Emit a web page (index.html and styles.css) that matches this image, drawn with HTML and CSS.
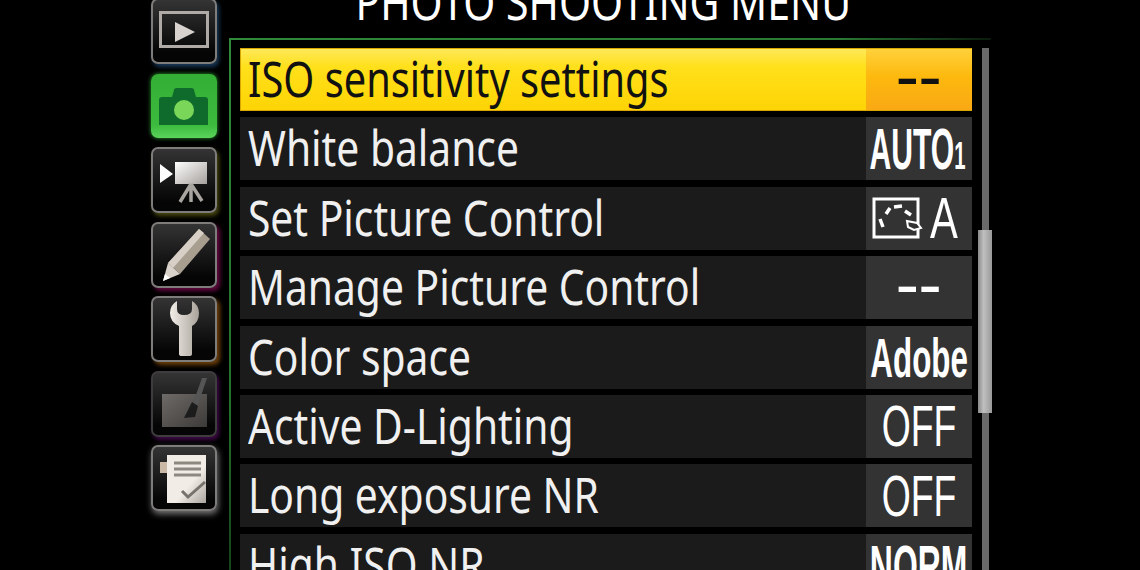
FILE: index.html
```html
<!DOCTYPE html>
<html lang="en">
<head>
  <meta charset="UTF-8" />
  <title>Photo Shooting Menu</title>
  <link rel="stylesheet" href="styles.css">
</head>
<body>
  <div class="screen">
    <div class="tabs">
      <div class="tab tab-play">
        <svg viewBox="0 0 66 66"><rect x="9.5" y="14.5" width="47" height="34" fill="none" stroke="#b0aaa6" stroke-width="3"/><path d="M24 24 L44 34 L24 44 Z" fill="#d8d2ce"/></svg>
      </div>
      <div class="tab tab-camera">
        <svg viewBox="0 0 66 64"><path d="M8 26 Q8 23 11 23 L21 23 L23 16 Q23 14 26 14 L40 14 Q43 14 43 16 L45 23 L54 23 Q57 23 57 26 L57 51 L8 51 Z" fill="#0f6b2c"/><circle cx="33" cy="36" r="10" fill="#7ad658"/></svg>
      </div>
      <div class="tab tab-movie">
        <svg viewBox="0 0 66 66">
          <defs><linearGradient id="screen-fill" x1="0" y1="0" x2="1" y2="1"><stop offset="0" stop-color="#fff"/><stop offset="1" stop-color="#a5a09c"/></linearGradient></defs>
          <path d="M9 17 L22 27 L9 36 Z" fill="#fff"/>
          <rect x="24" y="15" width="32" height="22" fill="url(#screen-fill)"/>
          <path d="M40 37 L29 55 M40 37 L40 55 M40 37 L51 54" stroke="#a8a4a0" stroke-width="3.5" fill="none"/>
        </svg>
      </div>
      <div class="tab tab-pencil">
        <svg viewBox="0 0 66 66">
          <path d="M17 41 L48 7 L59 17 L29 52 Z" fill="#a89e90"/>
          <path d="M17 41 L48 7 L53 11 L22 46 Z" fill="#d8d0c6"/>
          <path d="M17 41 L29 52 L12 59 Z" fill="#d8d2ca"/>
          <path d="M14 52 L19 56 L12 59 Z" fill="#fff"/>
        </svg>
      </div>
      <div class="tab tab-wrench">
        <svg viewBox="0 0 66 66">
          <defs><linearGradient id="wrench-fill" x1="0" y1="0" x2="1" y2="0"><stop offset="0" stop-color="#f2eee8"/><stop offset="1" stop-color="#a8a29a"/></linearGradient></defs>
          <path d="M26 5 L26 13 Q26 19 33 19 Q41 19 41 13 L41 5 Q48 9 48 17 Q48 26 41 30 L41 58 Q41 60 38 60 L31 60 Q28 60 28 58 L28 30 Q19 26 19 17 Q19 9 26 5 Z" fill="url(#wrench-fill)"/>
        </svg>
      </div>
      <div class="tab tab-retouch">
        <svg viewBox="0 0 66 66">
          <defs><linearGradient id="retouch-fill" x1="0" y1="0" x2="1" y2="1"><stop offset="0" stop-color="#6e6a68"/><stop offset="1" stop-color="#3c3a38"/></linearGradient></defs>
          <rect x="11" y="23" width="45" height="33" fill="url(#retouch-fill)"/>
          <path d="M56 7 L51 7 L42 32 L47 34 Z" fill="#555"/>
          <path d="M41 31 L47 35 L44 46 L33 47 Z" fill="#1c1c1c"/>
        </svg>
      </div>
      <div class="tab tab-recent">
        <svg viewBox="0 0 66 66">
          <defs><linearGradient id="sheet-fill" x1="0" y1="0" x2="1" y2="1"><stop offset="0.6" stop-color="#f1ede6"/><stop offset="1" stop-color="#a9a49e"/></linearGradient></defs>
          <rect x="9" y="17" width="8" height="11" fill="#c9b9a6"/>
          <rect x="16" y="10" width="39" height="48" fill="url(#sheet-fill)"/>
          <path d="M23 18 H50 M23 24 H50 M23 30 H50" stroke="#8d8880" stroke-width="2.8"/>
          <path d="M31 46 L37 52 L54 37" stroke="#77726c" stroke-width="3" fill="none"/>
        </svg>
      </div>
    </div>

    <div class="main">
      <h1 class="title"><span>PHOTO SHOOTING MENU</span></h1>
      <div class="panel">
        <ul class="rows">
          <li class="row row-active"><span class="label"><span>ISO sensitivity settings</span></span><span class="value"><span class="dashes">--</span></span></li>
          <li class="row"><span class="label"><span>White balance</span></span><span class="value"><span class="narrow narrow-auto">AUTO<small>1</small></span></span></li>
          <li class="row"><span class="label"><span>Set Picture Control</span></span><span class="value value-pc">
            <svg class="pc-icon" viewBox="0 0 48 42"><rect x="2" y="2" width="44" height="38" fill="none" stroke="#fff" stroke-width="3"/><path d="M8 22 L11 30 M14 17 L18 11 M22 10 L30 9 M33 14 L39 18" stroke="#fff" stroke-width="3.5" fill="none"/><path d="M35 24 L45 26 L49 31 L42 33 L36 30 Z" fill="#333" stroke="#fff" stroke-width="2"/></svg>
            <span class="pc-letter">A</span>
          </span></li>
          <li class="row"><span class="label"><span>Manage Picture Control</span></span><span class="value"><span class="dashes">--</span></span></li>
          <li class="row"><span class="label"><span>Color space</span></span><span class="value"><span class="narrow narrow-adobe">Adobe</span></span></li>
          <li class="row"><span class="label"><span>Active D-Lighting</span></span><span class="value"><span class="off">OFF</span></span></li>
          <li class="row"><span class="label"><span>Long exposure NR</span></span><span class="value"><span class="off">OFF</span></span></li>
          <li class="row"><span class="label"><span>High ISO NR</span></span><span class="value"><span class="narrow narrow-norm">NORM</span></span></li>
        </ul>
        <div class="scrollbar"><div class="thumb"></div></div>
      </div>
    </div>
  </div>
</body>
</html>
```

FILE: styles.css
```css
html, body {
  margin: 0;
  padding: 0;
  height: 570px;
  overflow: hidden;
  background: #000;
}

body {
  font-family: "Noto Sans", "Open Sans", sans-serif;
  color: #f0f0f0;
}

.screen {
  display: flex;
  align-items: flex-start;
  padding-left: 151px;
  margin-top: -2px;
}

.tabs {
  display: flex;
  flex-direction: column;
  gap: 8.5px;
  width: 66px;
  flex: none;
}

.tab {
  height: 66px;
  box-sizing: border-box;
  border: 2px solid #7f7d7b;
  border-radius: 7px;
  background: linear-gradient(#343434, #050505 85%);
}

.tab svg {
  display: block;
  width: 66px;
  height: 66px;
  margin: -2px;
}

.tab-play { box-shadow: 2px 3px 4px rgba(30, 70, 110, 0.8); }
.tab-movie { box-shadow: 2px 3px 4px rgba(90, 90, 20, 0.8); }
.tab-pencil { box-shadow: 3px 3px 4px rgba(110, 10, 70, 0.9); }
.tab-wrench { box-shadow: 3px 3px 4px rgba(120, 70, 10, 0.9); }
.tab-retouch { border-color: #3e3c3c; box-shadow: 2px 3px 4px rgba(70, 10, 80, 0.9); }
.tab-recent { box-shadow: 1px 3px 6px rgba(170, 170, 170, 0.7); }

.tab-camera {
  height: 64px;
  margin: 1px 0;
  border: none;
  background: linear-gradient(#34ae35, #3cbb3e 80%, #5ad45c);
  box-shadow: 0 0 4px #2f9f33;
}

.tab-camera svg {
  height: 64px;
  margin: 0;
}

.main {
  margin-left: 12px;
  width: 762px;
  flex: none;
}

.title {
  margin: 0;
  height: 40px;
  font-size: 50px;
  font-weight: 400;
  line-height: 6px;
  text-align: center;
  white-space: nowrap;
  color: #fff;
}

.title span {
  display: inline-block;
  transform: scaleX(0.82);
  margin-left: -14px;
}

.panel {
  display: flex;
  gap: 10px;
  padding: 10px 0 0 11px;
  background:
    linear-gradient(to right, #2f8a3a 0, #2a7a34 80%, #0a1a0c 100%) top left / 100% 2px no-repeat,
    linear-gradient(to bottom, #2f8a3a 0, #23702c 60%, #0e2e12 100%) top left / 2px 100% no-repeat;
}

.rows {
  list-style: none;
  margin: 0;
  padding: 0;
  width: 732px;
  flex: none;
  display: flex;
  flex-direction: column;
  gap: 6.4px;
}

.row {
  display: flex;
  height: 63px;
  flex: none;
  background: #1b1b1b;
}

.label {
  flex: 1;
  padding-left: 8px;
  font-size: 50px;
  line-height: 60px;
  white-space: nowrap;
}

.label span {
  display: inline-block;
  transform: scaleX(0.815);
  transform-origin: left center;
}

.value {
  width: 106px;
  box-sizing: border-box;
  flex: none;
  display: flex;
  align-items: center;
  justify-content: center;
  background: #333;
  color: #fff;
  white-space: nowrap;
}

.narrow {
  font-family: "Liberation Sans", sans-serif;
  font-weight: 700;
  font-size: 58px;
  display: inline-block;
  transform: scaleX(0.5);
}

.narrow-auto {
  transform: scaleX(0.52);
  margin-left: -4px;
}

.narrow-adobe {
  font-size: 56px;
  transform: scaleX(0.56);
}

.narrow-norm {
  transform: scaleX(0.55);
}

.narrow small {
  font-size: 39px;
}

.off {
  font-family: "Liberation Sans", sans-serif;
  font-size: 57px;
  display: inline-block;
  transform: scaleX(0.655);
}

.dashes {
  font-family: "Liberation Sans", sans-serif;
  font-weight: 700;
  font-size: 44px;
  line-height: 1;
  margin-bottom: 4px;
  display: inline-block;
  transform: scaleX(1.55);
}

.value-pc {
  justify-content: flex-start;
  padding-left: 6px;
  gap: 10px;
}

.pc-icon {
  width: 48px;
  height: 42px;
  flex: none;
  overflow: visible;
}

.pc-letter {
  font-family: "Liberation Sans", sans-serif;
  font-size: 58px;
  line-height: 1;
  display: inline-block;
  width: 32px;
  transform: scaleX(0.72);
  transform-origin: left center;
}

.row-active {
  background: linear-gradient(#ffe95c, #ffe01a 30%, #fed405);
  box-shadow: inset 0 0 0 1px #d9a600;
  color: #111;
}

.row-active .label span {
  transform: scaleX(0.795);
}

.row-active .value {
  background: linear-gradient(#ffd23c, #fdb90e 45%, #f9a814);
  box-shadow: inset 0 -1px 0 #d9a600, inset 0 1px 0 #d9a600;
  color: #111;
}

.scrollbar {
  position: relative;
  width: 7px;
  height: 600px;
  flex: none;
  background: #6a6a6a;
}

.thumb {
  position: absolute;
  top: 182px;
  left: -4px;
  width: 14px;
  height: 183px;
  background: linear-gradient(to right, #8a8a8a, #c0c0c0 40%, #999);
}
```
